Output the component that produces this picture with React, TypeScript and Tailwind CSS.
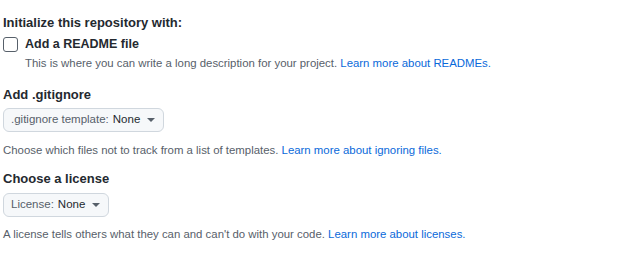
import React from 'react';

const Caret = () => (
  <svg width="8" height="4" viewBox="0 0 8 4" className="ml-[7px] fill-[#57606a]">
    <path d="M0 0h8L4 4z" />
  </svg>
);

const SelectButton: React.FC<{ label: string; value: string }> = ({ label, value }) => (
  <button
    type="button"
    className="flex h-[24px] items-center rounded-md border border-[#d0d7de] bg-[#f6f8fa] pl-[7px] pr-[8px] text-[11.5px] leading-none"
  >
    <span className="text-[#57606a]">{label}</span>
    <span className="ml-1 font-medium text-[#24292f]">{value}</span>
    <Caret />
  </button>
);

const Note: React.FC<{ text: string; link: string }> = ({ text, link }) => (
  <p className="text-[11.4px] leading-[18px] text-[#57606a]">
    {text} <a className="text-[#0969da]">{link}</a>
  </p>
);

export default function App() {
  return (
    <div
      className="h-[254px] w-[636px] bg-white pl-[3px] pt-[13px] text-[#24292f]"
      style={{ fontFamily: '"Liberation Sans", Arial, sans-serif' }}
    >
      <h2 className="text-[13px] font-semibold leading-[20px]">Initialize this repository with:</h2>

      <div className="mt-[2px] flex">
        <span className="mt-[2px] block h-[15px] w-[15px] shrink-0 rounded-[3px] border border-[#57606a] bg-white" />
        <div className="ml-[7px]">
          <div className="text-[12.5px] font-semibold leading-[18px]">Add a README file</div>
          <div className="mt-[1px]">
            <Note
              text="This is where you can write a long description for your project."
              link="Learn more about READMEs."
            />
          </div>
        </div>
      </div>

      <h2 className="mt-[13px] text-[13px] font-semibold leading-[20px]">Add .gitignore</h2>
      <div className="mt-[3px]">
        <SelectButton label=".gitignore template:" value="None" />
      </div>
      <div className="mt-[9px]">
        <Note
          text="Choose which files not to track from a list of templates."
          link="Learn more about ignoring files."
        />
      </div>

      <h2 className="mt-[10px] text-[13px] font-semibold leading-[20px]">Choose a license</h2>
      <div className="mt-[4px]">
        <SelectButton label="License:" value="None" />
      </div>
      <div className="mt-[8px]">
        <Note
          text="A license tells others what they can and can't do with your code."
          link="Learn more about licenses."
        />
      </div>
    </div>
  );
}
